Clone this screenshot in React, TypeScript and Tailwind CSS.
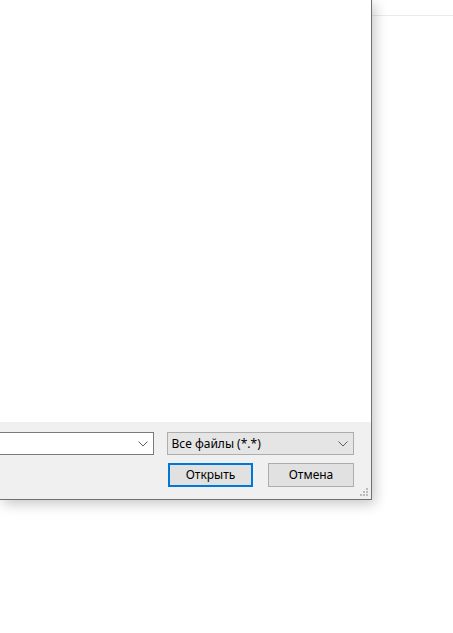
const Chevron = () => (
  <svg width="10" height="6" viewBox="0 0 10 6" className="shrink-0">
    <path d="M0.5 0.5 L5 5 L9.5 0.5" fill="none" stroke="#5f5f5f" strokeWidth="1" />
  </svg>
)

const Grip = () => (
  <svg width="8" height="8" viewBox="0 0 8 8" className="absolute right-[3px] bottom-[3px]">
    {[
      [6, 0],
      [3, 3],
      [6, 3],
      [0, 6],
      [3, 6],
      [6, 6],
    ].map(([x, y]) => (
      <rect key={`${x}-${y}`} x={x} y={y} width="2" height="2" fill="#bcbcbc" />
    ))}
  </svg>
)

export default function App() {
  return (
    <div
      className="flex h-[633px] w-[453px] overflow-hidden bg-white"
      style={{ fontFamily: '"Noto Sans", "Open Sans", sans-serif' }}
    >
      <div className="relative z-10 flex h-[500px] w-[372px] shrink-0 flex-col border-r border-b border-[#707070] bg-white shadow-[3px_4px_12px_rgba(0,0,0,0.22)]">
        <div className="flex-1 bg-white" />

        <div className="relative flex h-[77px] flex-col gap-[8px] bg-[#f0f0f0] pt-[10px] pr-[17px]">
          <div className="flex items-center gap-[13px]">
            <div className="flex h-[23px] w-[154px] items-center justify-end border border-l-0 border-[#7a7a7a] bg-white pr-[5px]">
              <Chevron />
            </div>
            <div className="flex h-[23px] w-[188px] items-center justify-between border border-[#adadad] bg-[#e5e5e5] pr-[5px] pl-[4px]">
              <span className="text-[12px] leading-none text-black">Все файлы (*.*)</span>
              <Chevron />
            </div>
          </div>

          <div className="flex items-center justify-end gap-[15px]">
            <button className="flex h-[24px] w-[85px] items-center justify-center border-2 border-[#0078d7] bg-[#e1e1e1] text-[12px] text-black">
              Открыть
            </button>
            <button className="flex h-[24px] w-[86px] items-center justify-center border border-[#adadad] bg-[#e1e1e1] text-[12px] text-black">
              Отмена
            </button>
          </div>

          <Grip />
        </div>
      </div>

      <div className="flex-1 pt-[15px]">
        <div className="h-px bg-[#ebebeb]" />
      </div>
    </div>
  )
}
